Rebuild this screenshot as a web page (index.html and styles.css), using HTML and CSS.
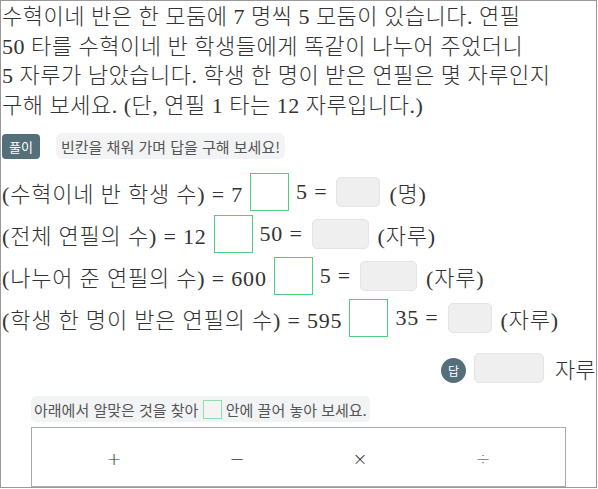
FILE: index.html
```html
<!DOCTYPE html>
<html lang="ko">
<head>
<meta charset="utf-8">
<link rel="stylesheet" href="styles.css">
</head>
<body>
<div class="frame">
  <p class="question">수혁이네 반은 한 모둠에 7 명씩 5 모둠이 있습니다. 연필<br>50 타를 수혁이네 반 학생들에게 똑같이 나누어 주었더니<br>5 자루가 남았습니다. 학생 한 명이 받은 연필은 몇 자루인지<br>구해 보세요. (단, 연필 1 타는 12 자루입니다.)</p>

  <div class="guide">
    <span class="badge">풀이</span>
    <span class="hint">빈칸을 채워 가며 답을 구해 보세요!</span>
  </div>

  <div class="eq">
    <span>(수혁이네 반 학생 수) = 7</span>
    <span class="drop"></span>
    <span>5 =</span>
    <span class="ans w44"></span>
    <span>(명)</span>
  </div>
  <div class="eq">
    <span>(전체 연필의 수) = 12</span>
    <span class="drop"></span>
    <span>50 =</span>
    <span class="ans w57"></span>
    <span>(자루)</span>
  </div>
  <div class="eq">
    <span>(나누어 준 연필의 수) = 600</span>
    <span class="drop"></span>
    <span>5 =</span>
    <span class="ans w57"></span>
    <span>(자루)</span>
  </div>
  <div class="eq">
    <span>(학생 한 명이 받은 연필의 수) = 595</span>
    <span class="drop"></span>
    <span>35 =</span>
    <span class="ans w44"></span>
    <span>(자루)</span>
  </div>

  <div class="answer">
    <span class="dap">답</span>
    <span class="ans w70"></span>
    <span class="unit">자루</span>
  </div>

  <div class="instr">
    <span class="instr-text">아래에서 알맞은 것을 찾아 <span class="mini"></span> 안에 끌어 놓아 보세요.</span>
  </div>

  <div class="tray">
    <span class="sym">+</span>
    <span class="sym">−</span>
    <span class="sym">×</span>
    <span class="sym">÷</span>
  </div>
</div>
</body>
</html>
```

FILE: styles.css
```css
* { box-sizing: border-box; }
html, body {
  margin: 0;
  padding: 0;
  background: #fff;
}
.frame {
  width: 597px;
  height: 488px;
  border: 1px solid #999;
  overflow: hidden;
  color: #333;
  font-family: "Liberation Serif", "Noto Sans CJK KR", serif;
  font-weight: 300;
}
.question {
  margin: 0;
  padding: 1px 0 0 1px;
  font-size: 22px;
  line-height: 29.6px;
  letter-spacing: 0.5px;
  white-space: nowrap;
}
.guide {
  margin-top: 13px;
  display: flex;
  align-items: center;
  gap: 16px;
  padding-left: 1px;
  font-family: "Noto Sans CJK KR", "Noto Sans", sans-serif;
  font-weight: 400;
}
.badge {
  width: 38px;
  height: 25px;
  border-radius: 4px;
  background: #546e7a;
  color: #fff;
  font-size: 13px;
  display: flex;
  align-items: center;
  justify-content: center;
}
.hint {
  height: 26px;
  padding: 0 5px;
  border-radius: 6px;
  background: #f2f3f4;
  color: #555;
  font-size: 15px;
  display: flex;
  align-items: center;
}
.eq {
  height: 42px;
  display: flex;
  align-items: center;
  gap: 7px;
  padding-left: 1px;
  font-size: 22px;
  letter-spacing: 0.8px;
  white-space: nowrap;
}
.guide + .eq { margin-top: 12px; }
.drop {
  width: 39px;
  height: 38px;
  border: 1px solid #4cd07d;
  background: #fff;
  flex: none;
}
.ans {
  height: 30px;
  border: 1px solid #e4e4e4;
  background: #efefef;
  border-radius: 5px;
  margin: 0 2px;
  flex: none;
}
.w44 { width: 44px; }
.w57 { width: 57px; }
.w70 { width: 70px; margin: 0; }
.answer {
  margin-top: 8px;
  height: 42px;
  display: flex;
  align-items: center;
  padding-left: 440px;
  white-space: nowrap;
}
.dap {
  width: 25px;
  height: 25px;
  border-radius: 50%;
  background: #546e7a;
  color: #fff;
  font-family: "Noto Sans CJK KR", sans-serif;
  font-weight: 400;
  font-size: 12px;
  display: flex;
  align-items: center;
  justify-content: center;
  flex: none;
  margin-top: 5px;
  margin-right: 8px;
}
.unit {
  margin-left: 11px;
  font-size: 22px;
  font-family: "Noto Sans CJK KR", sans-serif;
  font-weight: 300;
  flex: none;
}
.instr {
  margin-top: 7px;
  padding-left: 30px;
  display: flex;
}
.instr-text {
  height: 26px;
  padding: 0 3px;
  border-radius: 5px;
  background: #f2f3f4;
  color: #555;
  font-family: "Noto Sans CJK KR", "Noto Sans", sans-serif;
  font-weight: 400;
  font-size: 15px;
  display: flex;
  align-items: center;
  white-space: pre;
}
.mini {
  width: 19px;
  height: 19px;
  border: 1px solid #8fdfa9;
  background: #f4f4f4;
  display: inline-block;
}
.tray {
  margin: 5px 0 0 30px;
  width: 535px;
  height: 60px;
  border: 1px solid #aaa;
  display: flex;
  justify-content: center;
  align-items: center;
}
.sym {
  width: 123px;
  text-align: center;
  font-family: "DejaVu Sans", sans-serif;
  font-weight: 200;
  font-size: 18px;
  color: #333;
  margin-top: 2px;
}
```
